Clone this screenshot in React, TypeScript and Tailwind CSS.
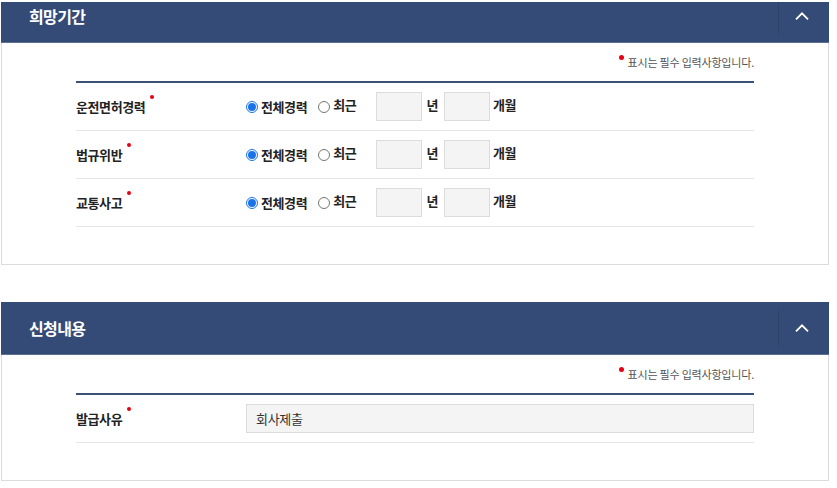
import React from "react";

const FONT = { fontFamily: '"Noto Sans CJK KR", "Noto Sans", sans-serif' };

function Chevron() {
  return (
    <svg width="14" height="8" viewBox="0 0 14 8" fill="none">
      <path d="M1 7.3 L7 1.3 L13 7.3" stroke="#ffffff" strokeWidth="1.8" />
    </svg>
  );
}

function HeaderInner({ title }: { title: string }) {
  return (
    <div className="h-[53px] flex items-center bg-[#344b77] border-b border-[#5d6f91]">
      <div className="flex-1 pl-[28px] text-white text-[16px] font-bold tracking-[-0.6px]">{title}</div>
      <div className="h-[36px] w-[51px] border-l border-[#2c416a] flex items-center justify-center pr-[4px]">
        <Chevron />
      </div>
    </div>
  );
}

function Dot() {
  return <span className="inline-block shrink-0 w-[4px] h-[4px] rounded-full bg-[#e60012] self-start mt-[-2px] ml-[5px]" />;
}

function Note() {
  return (
    <div className="h-[38px] flex items-center justify-end">
      <span className="inline-block w-[5px] h-[5px] rounded-full bg-[#e60012] mr-[4px] mt-[-9px]" />
      <span className="text-[11px] text-[#555] tracking-[-0.2px]">표시는 필수 입력사항입니다.</span>
    </div>
  );
}

function Radio({ checked }: { checked: boolean }) {
  return checked ? (
    <span className="inline-flex shrink-0 w-[12px] h-[12px] rounded-full border border-[#1a73e8] items-center justify-center bg-white">
      <span className="block w-[8px] h-[8px] rounded-full bg-[#1a73e8]" />
    </span>
  ) : (
    <span className="inline-block shrink-0 w-[12px] h-[12px] rounded-full border border-[#767676] bg-white" />
  );
}

function Label({ text }: { text: string }) {
  return (
    <div className="w-[170px] flex items-center">
      <span className="text-[13px] font-bold text-[#222] tracking-[-0.4px]">{text}</span>
      <Dot />
    </div>
  );
}

function Box() {
  return <div className="w-[46px] h-[29px] bg-[#f4f4f4] border border-[#dcdcdc]" />;
}

function PeriodRow({ label }: { label: string }) {
  return (
    <div className="h-[48px] flex items-center border-b border-[#e6e6e6]">
      <Label text={label} />
      <div className="flex items-center text-[13px] font-bold text-[#222] tracking-[-0.4px]">
        <Radio checked />
        <span className="ml-[3px]">전체경력</span>
        <span className="ml-[11px] flex"><Radio checked={false} /></span>
        <span className="ml-[3px] mt-[-3px]">최근</span>
        <div className="ml-[20px]"><Box /></div>
        <span className="ml-[4px] mt-[-3px]">년</span>
        <div className="ml-[6px]"><Box /></div>
        <span className="ml-[3px] mt-[-3px]">개월</span>
      </div>
    </div>
  );
}

export default function App() {
  return (
    <div className="w-[837px] h-[488px] bg-white pt-[2px] pl-[1px]" style={FONT}>
      {/* Panel 1 */}
      <div className="w-[828px]">
        <div className="h-[41px] overflow-hidden">
          <div className="-mt-[12px]">
            <HeaderInner title="희망기간" />
          </div>
        </div>
        <div className="border-x border-b border-[#dcdcdc] px-[74px] pb-[37px]">
          <Note />
          <div className="border-t-2 border-[#3b5076]">
            <PeriodRow label="운전면허경력" />
            <PeriodRow label="법규위반" />
            <PeriodRow label="교통사고" />
          </div>
        </div>
      </div>

      {/* Panel 2 */}
      <div className="w-[828px] mt-[37px]">
        <HeaderInner title="신청내용" />
        <div className="border-x border-b border-[#dcdcdc] px-[74px] pb-[37px]">
          <Note />
          <div className="border-t-2 border-[#3b5076]">
            <div className="h-[48px] flex items-center border-b border-[#e6e6e6]">
              <Label text="발급사유" />
              <div className="flex-1 h-[29px] bg-[#f4f4f4] border border-[#dcdcdc] flex items-center pl-[9px] text-[13px] text-[#333] tracking-[-0.3px]">
                회사제출
              </div>
            </div>
          </div>
        </div>
      </div>
    </div>
  );
}
